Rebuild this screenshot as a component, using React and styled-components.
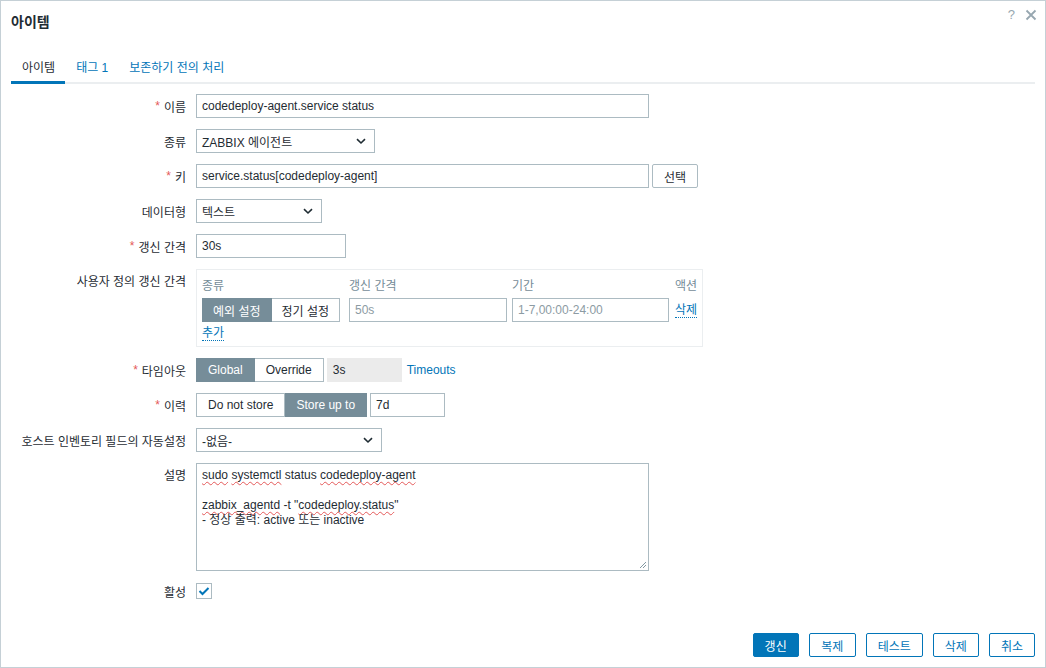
import React from "react";
import styled, { createGlobalStyle, css } from "styled-components";

const GlobalStyle = createGlobalStyle`
  html, body {
    margin: 0;
    padding: 0;
    background: #ffffff;
  }
  body {
    font-family: "Liberation Sans", Arial, "Noto Sans CJK KR", sans-serif;
    font-size: 12px;
    color: #1f2c33;
  }
  * {
    box-sizing: border-box;
  }
`;

const Dialog = styled.div`
  width: 1046px;
  height: 668px;
  border: 1px solid #c5d0d6;
  background: #fff;
  display: flex;
  flex-direction: column;
  position: relative;
`;

const Header = styled.div`
  height: 40px;
  display: flex;
  align-items: center;
  padding: 0 10px;
`;

const Title = styled.h4`
  margin: 0;
  font-size: 14px;
  font-weight: bold;
  color: #1f2c33;
  flex: 1;
`;

const HeaderIcons = styled.div`
  position: absolute;
  top: 6px;
  right: 8px;
  display: flex;
  gap: 10px;
  align-items: center;
  color: #97a7b0;
`;

const HelpMark = styled.span`
  font-size: 13px;
`;

const Body = styled.div`
  flex: 1;
  padding: 0 10px;
`;

const Tabs = styled.div`
  display: flex;
  margin-top: 10px;
  border-bottom: 2px solid #ebeef0;
  height: 33px;
`;

const Tab = styled.div`
  padding: 0 10px 0 11px;
  display: flex;
  align-items: center;
  height: 33px;
  margin-bottom: -2px;
  color: ${(p) => (p.active ? "#1f2c33" : "#0275b8")};
  border-bottom: 3px solid ${(p) => (p.active ? "#0275b8" : "transparent")};
`;

const Form = styled.div`
  display: grid;
  grid-template-columns: 175px 1fr;
  column-gap: 10px;
  row-gap: 11px;
  padding-top: 10px;
`;

const Label = styled.label`
  text-align: right;
  display: flex;
  justify-content: flex-end;
  align-items: ${(p) => (p.top ? "flex-start" : "center")};
  padding-top: ${(p) => (p.top ? "3px" : "0")};
  height: ${(p) => (p.top ? "auto" : `${p.h || 24}px`)};
  color: #1f2c33;
  white-space: nowrap;
`;

const Req = styled.span`
  color: #e45959;
  margin-right: 4px;
`;

const Field = styled.div`
  display: flex;
  align-items: flex-start;
  gap: 3px;
  min-height: ${(p) => p.h || 24}px;
`;

const inputBase = css`
  height: 24px;
  border: 1px solid #acbbc2;
  background: #fff;
  padding: 0 5px;
  display: flex;
  align-items: center;
  font-size: 12px;
  color: #1f2c33;
  white-space: nowrap;
`;

const TextBox = styled.div`
  ${inputBase};
  width: ${(p) => p.w}px;
  color: ${(p) => (p.muted ? "#8c9ba3" : "#1f2c33")};
  background: ${(p) => (p.readonly ? "#ebebeb" : "#fff")};
  border-color: ${(p) => (p.readonly ? "#ebebeb" : "#acbbc2")};
`;

const SelectBox = styled.div`
  ${inputBase};
  width: ${(p) => p.w}px;
  justify-content: space-between;
  padding-right: 8px;
`;

const Chevron = () => (
  <svg width="10" height="7" viewBox="0 0 10 7">
    <path d="M1 1.2 L5 5 L9 1.2" fill="none" stroke="#1f2c33" strokeWidth="1.6" />
  </svg>
);

const Button = styled.div`
  height: 24px;
  padding: 0 11px;
  border: 1px solid ${(p) => (p.primary || p.link ? "#0275b8" : "#acbbc2")};
  background: ${(p) => (p.primary ? "#0275b8" : "#fff")};
  color: ${(p) => (p.primary ? "#fff" : p.link ? "#0275b8" : "#1f2c33")};
  border-radius: 2px;
  display: flex;
  align-items: center;
  justify-content: center;
  min-width: ${(p) => p.minw || 0}px;
`;

const Segmented = styled.div`
  display: flex;
  height: 24px;
`;

const Segment = styled.div`
  height: 24px;
  padding: 0 ${(p) => p.pad || 11}px;
  display: flex;
  align-items: center;
  border: 1px solid ${(p) => (p.on ? "#768d99" : "#acbbc2")};
  background: ${(p) => (p.on ? "#768d99" : "#fff")};
  color: ${(p) => (p.on ? "#fff" : "#1f2c33")};
  & + & {
    border-left: none;
  }
`;

const Link = styled.span`
  color: #0275b8;
  border-bottom: ${(p) => (p.dotted ? "1px dotted #0275b8" : "none")};
  line-height: 14px;
  white-space: nowrap;
`;

const TimeoutLink = styled(Link)`
  align-self: center;
  margin-left: 2px;
`;

const IntervalBox = styled.div`
  width: 507px;
  border: 1px solid #ebeef0;
  padding: 5px;
`;

const IntervalGrid = styled.div`
  display: grid;
  grid-template-columns: 147px 163px 1fr auto;
  row-gap: 5px;
  align-items: center;
`;

const ColHead = styled.div`
  color: #768d99;
  height: 18px;
  display: flex;
  align-items: center;
  white-space: nowrap;
  justify-content: ${(p) => (p.right ? "flex-end" : "flex-start")};
`;

const ActionCell = styled.div`
  display: flex;
  justify-content: flex-end;
`;

const AddRow = styled.div`
  margin-top: 4px;
  display: flex;
`;

const TextArea = styled.div`
  width: 453px;
  height: 108px;
  border: 1px solid #acbbc2;
  padding: 4px 5px;
  line-height: 15px;
  position: relative;
  white-space: pre;
`;

const Squiggle = styled.span`
  text-decoration: underline wavy #e45959;
  text-decoration-thickness: 1px;
  text-underline-offset: 2px;
`;

const Grip = styled.svg`
  position: absolute;
  right: 1px;
  bottom: 1px;
`;

const Checkbox = styled.div`
  width: 16px;
  height: 16px;
  border: 1px solid #acbbc2;
  margin-top: 1px;
  display: flex;
  align-items: center;
  justify-content: center;
`;

const Footer = styled.div`
  display: flex;
  justify-content: flex-end;
  gap: 10px;
  padding: 0 10px 10px 0;
`;

export default function App() {
  return (
    <>
      <GlobalStyle />
      <Dialog>
        <Header>
          <Title>아이템</Title>
        </Header>
        <HeaderIcons>
          <HelpMark>?</HelpMark>
          <svg width="12" height="12" viewBox="0 0 12 12">
            <path d="M1.5 1.5 L10.5 10.5 M10.5 1.5 L1.5 10.5" stroke="#97a7b0" strokeWidth="1.8" />
          </svg>
        </HeaderIcons>
        <Body>
          <Tabs>
            <Tab active>아이템</Tab>
            <Tab>태그 1</Tab>
            <Tab>보존하기 전의 처리</Tab>
          </Tabs>
          <Form>
            <Label><Req>*</Req>이름</Label>
            <Field><TextBox w={453}>codedeploy-agent.service status</TextBox></Field>

            <Label>종류</Label>
            <Field><SelectBox w={179}>ZABBIX 에이전트<Chevron /></SelectBox></Field>

            <Label><Req>*</Req>키</Label>
            <Field>
              <TextBox w={453}>service.status[codedeploy-agent]</TextBox>
              <Button minw={46}>선택</Button>
            </Field>

            <Label>데이터형</Label>
            <Field><SelectBox w={126}>텍스트<Chevron /></SelectBox></Field>

            <Label><Req>*</Req>갱신 간격</Label>
            <Field><TextBox w={150}>30s</TextBox></Field>

            <Label top>사용자 정의 갱신 간격</Label>
            <Field>
              <IntervalBox>
                <IntervalGrid>
                  <ColHead>종류</ColHead>
                  <ColHead>갱신 간격</ColHead>
                  <ColHead>기간</ColHead>
                  <ColHead right>액션</ColHead>
                  <Segmented>
                    <Segment on pad={10}>예외 설정</Segment>
                    <Segment pad={10}>정기 설정</Segment>
                  </Segmented>
                  <TextBox w={158} muted>50s</TextBox>
                  <TextBox w={157} muted>1-7,00:00-24:00</TextBox>
                  <ActionCell><Link dotted>삭제</Link></ActionCell>
                </IntervalGrid>
                <AddRow><Link dotted>추가</Link></AddRow>
              </IntervalBox>
            </Field>

            <Label><Req>*</Req>타임아웃</Label>
            <Field>
              <Segmented>
                <Segment on>Global</Segment>
                <Segment>Override</Segment>
              </Segmented>
              <TextBox w={75} readonly>3s</TextBox>
              <TimeoutLink>Timeouts</TimeoutLink>
            </Field>

            <Label><Req>*</Req>이력</Label>
            <Field>
              <Segmented>
                <Segment>Do not store</Segment>
                <Segment on>Store up to</Segment>
              </Segmented>
              <TextBox w={75}>7d</TextBox>
            </Field>

            <Label>호스트 인벤토리 필드의 자동설정</Label>
            <Field><SelectBox w={186}>-없음-<Chevron /></SelectBox></Field>

            <Label top>설명</Label>
            <Field>
              <TextArea>
                <Squiggle>sudo</Squiggle> <Squiggle>systemctl</Squiggle> status <Squiggle>codedeploy-agent</Squiggle>{"\n"}
                {"\n"}
                <Squiggle>zabbix_agentd</Squiggle> -t "<Squiggle>codedeploy.status</Squiggle>"{"\n"}
                - 정상 출력: active 또는 inactive
                <Grip width="9" height="9" viewBox="0 0 9 9">
                  <path d="M8 2 L2 8 M8 5 L5 8" stroke="#768d99" strokeWidth="0.9" />
                </Grip>
              </TextArea>
            </Field>

            <Label h={18}>활성</Label>
            <Field h={18}>
              <Checkbox>
                <svg width="12" height="10" viewBox="0 0 12 10">
                  <path d="M1.5 5 L4.5 8 L10.5 2" fill="none" stroke="#0275b8" strokeWidth="2" />
                </svg>
              </Checkbox>
            </Field>
          </Form>
        </Body>
        <Footer>
          <Button primary minw={46}>갱신</Button>
          <Button link minw={47}>복제</Button>
          <Button link minw={57}>테스트</Button>
          <Button link minw={46}>삭제</Button>
          <Button link minw={46}>취소</Button>
        </Footer>
      </Dialog>
    </>
  );
}
